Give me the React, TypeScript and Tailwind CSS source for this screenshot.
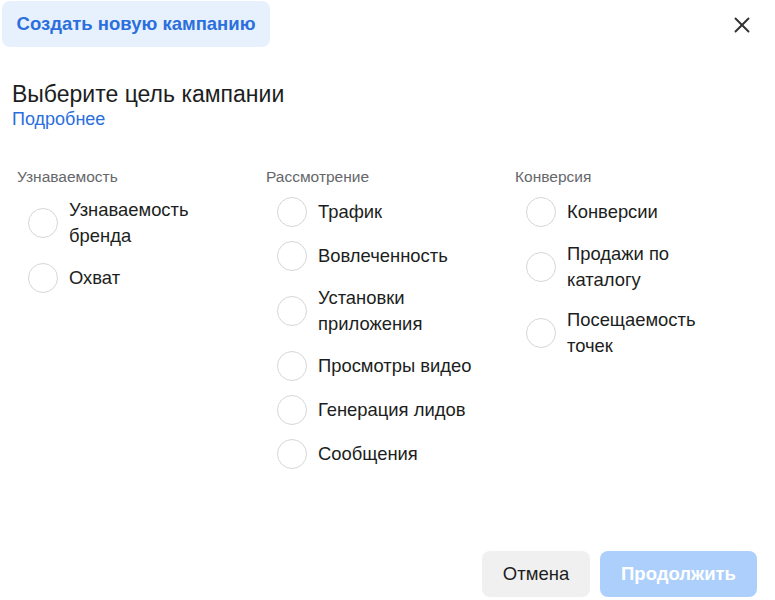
import { X } from "lucide-react";

const columns = [
    { title: "Узнаваемость", items: ["Узнаваемость бренда", "Охват"] },
    {
        title: "Рассмотрение",
        items: ["Трафик", "Вовлеченность", "Установки приложения", "Просмотры видео", "Генерация лидов", "Сообщения"],
    },
    { title: "Конверсия", items: ["Конверсии", "Продажи по каталогу", "Посещаемость точек"] },
];

function Radio({ label }: { label: string }) {
    return (
        <label className="flex items-center gap-[11px] pl-[11px] cursor-pointer">
            <span className="w-[30px] h-[30px] shrink-0 rounded-full border-[1.5px] border-[#d4d6da] bg-white" />
            <span className="max-w-[162px] py-[1px] text-[18.4px] leading-[26px] text-[#1c1e21] min-h-[32px] flex items-center">{label}</span>
        </label>
    );
}

export default function App() {
    return (
        <div className="w-[775px] h-[600px] bg-white flex flex-col font-['Liberation_Sans',Arial,sans-serif]">
            <div className="flex items-start justify-between pl-[2px] pt-[1px] pr-[20px]">
                <button className="h-[46px] w-[268px] rounded-[8px] bg-[#e7f0fd] text-[18.5px] font-bold text-[#2a6fdd]">
                    Создать новую кампанию
                </button>
                <button className="mt-[11px] text-[#333]">
                    <X className="w-[26px] h-[26px]" strokeWidth={1.8} />
                </button>
            </div>

            <div className="pl-[12px] pt-[33px]">
                <h2 className="text-[23px] leading-[28px] text-[#1c1e21]">Выберите цель кампании</h2>
                <a className="text-[18px] leading-[22px] text-[#2a6fdd]">Подробнее</a>
            </div>

            <div className="grid grid-cols-[249px_249px_249px] pl-[17px] pt-[36px]">
                {columns.map((col) => (
                    <div key={col.title} className="flex flex-col">
                        <div className="text-[15.5px] leading-[18px] text-[#65676b] mb-[10px]">{col.title}</div>
                        <div className="flex flex-col gap-[12px]">
                            {col.items.map((item) => (
                                <Radio key={item} label={item} />
                            ))}
                        </div>
                    </div>
                ))}
            </div>

            <div className="mt-auto flex justify-end gap-[10px] pr-[18px] pb-[3px]">
                <button className="h-[46px] w-[108px] rounded-[8px] bg-[#f0f0f0] text-[18.5px] text-[#1c1e21]">Отмена</button>
                <button className="h-[46px] w-[157px] rounded-[8px] bg-[#acd0fb] text-[18.5px] font-bold text-white">Продолжить</button>
            </div>
        </div>
    );
}
